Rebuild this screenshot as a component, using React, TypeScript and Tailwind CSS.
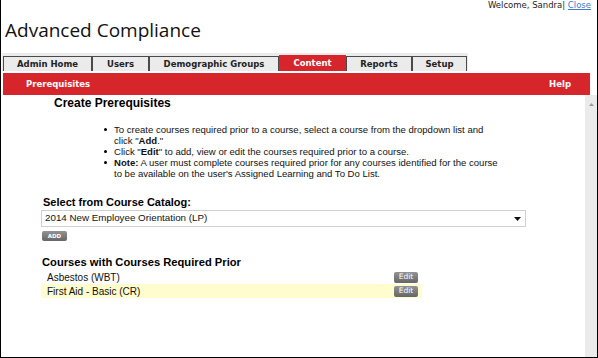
const tabs = [
  { label: "Admin Home", w: "w-[89px]" },
  { label: "Users", w: "w-[57px]" },
  { label: "Demographic Groups", w: "w-[130px]" },
  { label: "Content", w: "w-[67px]", active: true },
  { label: "Reports", w: "w-[66px]" },
  { label: "Setup", w: "w-[55px]" },
];

const courses = [
  { name: "Asbestos (WBT)" },
  { name: "First Aid - Basic (CR)", highlight: true },
];

function Bullet({ children }: { children: React.ReactNode }) {
  return (
    <li className="flex">
      <span className="mt-[4px] mr-[7px] h-[3px] w-[3px] shrink-0 rounded-full bg-black" />
      <span className="whitespace-nowrap">{children}</span>
    </li>
  );
}

function SmallButton({ label, className }: { label: string; className: string }) {
  return (
    <div
      className={`flex items-center justify-center rounded-[2px] bg-gradient-to-b from-[#939393] to-[#666] font-['DejaVu_Sans',sans-serif] text-white ${className}`}
    >
      {label}
    </div>
  );
}

export default function App() {
  return (
    <div className="flex h-[358px] w-[598px] flex-col overflow-hidden border-x border-b border-black bg-white text-black">
      {/* header */}
      <div className="h-[53px] shrink-0">
        <div className="flex h-[11px] justify-end pr-[6px] font-['DejaVu_Sans',sans-serif] text-[8.5px] leading-[11px] text-[#222]">
          Welcome, Sandra|&nbsp;<span className="text-[#3a7bd5] underline">Close</span>
        </div>
        <div className="mt-[7px] pl-[4px] font-['Open_Sans',sans-serif] text-[19px] leading-[24px] text-[#111]">
          Advanced Compliance
        </div>
      </div>

      {/* tabs */}
      <div className="ml-[1px] flex h-[18px] w-[466px] shrink-0 items-end bg-[#ebebeb] pl-[1px]">
        {tabs.map((t) =>
          t.active ? (
            <div
              key={t.label}
              className={`${t.w} flex h-[16px] items-center justify-center bg-[#d7262b] font-['DejaVu_Sans',sans-serif] text-[8.5px] font-bold text-white`}
            >
              {t.label}
            </div>
          ) : (
            <div
              key={t.label}
              className={`${t.w} flex h-[15px] items-center justify-center border border-b-0 border-[#4a4a4a] bg-[#ebebeb] font-['DejaVu_Sans',sans-serif] text-[8.5px] font-bold text-[#222]`}
            >
              {t.label}
            </div>
          )
        )}
      </div>

      {/* red sub bar */}
      <div className="mt-[2px] ml-[2px] flex h-[22px] w-[587px] shrink-0 items-center justify-between bg-[#d7262b] pr-[19px] pl-[23px] font-['DejaVu_Sans',sans-serif] text-[8.5px] font-bold text-white">
        <span>Prerequisites</span>
        <span>Help</span>
      </div>

      {/* body */}
      <div className="flex min-h-0 flex-1">
        <div className="flex-1 font-['Liberation_Sans',Arial,sans-serif]">
          <h1 className="pt-[1px] pl-[53px] text-[12px] leading-[14px] font-bold">Create Prerequisites</h1>

          <ul className="mt-[14px] ml-[103px] text-[9.55px] leading-[11px] text-[#111]">
            <Bullet>
              To create courses required prior to a course, select a course from the dropdown list and
              <br />
              click "<b>Add</b>."
            </Bullet>
            <Bullet>
              Click "<b>Edit</b>" to add, view or edit the courses required prior to a course.
            </Bullet>
            <Bullet>
              <b>Note:</b> A user must complete courses required prior for any courses identified for the course
              <br />
              to be available on the user's Assigned Learning and To Do List.
            </Bullet>
          </ul>

          <div className="mt-[16px] pl-[42px] text-[11px] leading-[14px] font-bold">Select from Course Catalog:</div>
          <div className="mt-[1px] ml-[40px] flex h-[17px] w-[485px] items-center justify-between border border-[#d0d0d0] pr-[4px] pl-[3px] text-[9.8px] text-[#111]">
            <span>2014 New Employee Orientation (LP)</span>
            <svg width="7" height="4" viewBox="0 0 7 4">
              <path d="M0 0h7L3.5 4z" fill="#111" />
            </svg>
          </div>
          <SmallButton label="ADD" className="mt-[4px] ml-[41px] h-[10px] w-[25px] text-[5.5px] font-bold" />

          <div className="mt-[14px] pl-[41px] text-[11.2px] leading-[14px] font-bold">Courses with Courses Required Prior</div>
          <div className="mt-[1px] ml-[40px] w-[381px]">
            {courses.map((c) => (
              <div
                key={c.name}
                className={`flex h-[14px] items-center justify-between pr-[4px] pl-[6px] text-[10px] text-[#111] ${c.highlight ? "bg-[#fffcce]" : ""}`}
              >
                <span>{c.name}</span>
                <SmallButton label="Edit" className="h-[11px] w-[24px] text-[7.5px]" />
              </div>
            ))}
          </div>
        </div>

        {/* scrollbar */}
        <div className="flex w-[12px] shrink-0 justify-center bg-[#ebebeb] pt-[8px]">
          <svg width="5" height="3" viewBox="0 0 5 3">
            <path d="M0 3L2.5 0L5 3z" fill="#9a9a9a" />
          </svg>
        </div>
      </div>
    </div>
  );
}
